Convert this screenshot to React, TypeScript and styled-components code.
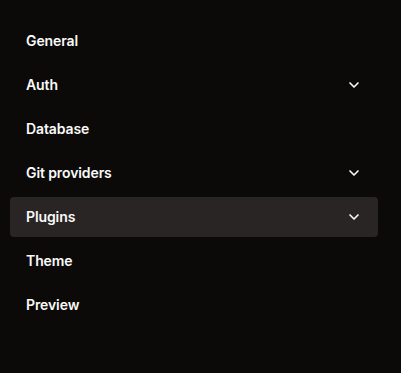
import React from "react";
import styled, { createGlobalStyle } from "styled-components";
import { ChevronDown } from "lucide-react";

const Global = createGlobalStyle`
  html, body { margin: 0; padding: 0; background: #0c0a09; }
  body { font-family: Inter, "Noto Sans", sans-serif; }
`;

const Page = styled.div`
  width: 401px;
  height: 373px;
  background: #0c0a09;
  box-sizing: border-box;
  padding: 21px 23px 0 10px;
`;

const Nav = styled.nav`
  display: flex;
  flex-direction: column;
  gap: 4px;
`;

const Item = styled.div<{ $active?: boolean }>`
  height: 40px;
  display: flex;
  align-items: center;
  justify-content: space-between;
  padding: 0 16px;
  border-radius: 4px;
  background: ${(p) => (p.$active ? "#292524" : "transparent")};
  color: #fafaf9;
  font-size: 14px;
  font-weight: 600;
  letter-spacing: -0.1px;
`;

const Label = styled.span`
  margin-top: -2px;
`;

const Chevron = styled(ChevronDown)`
  width: 16px;
  height: 16px;
  color: #fafaf9;
`;

const items: { label: string; expandable?: boolean; active?: boolean }[] = [
  { label: "General" },
  { label: "Auth", expandable: true },
  { label: "Database" },
  { label: "Git providers", expandable: true },
  { label: "Plugins", expandable: true, active: true },
  { label: "Theme" },
  { label: "Preview" },
];

export default function App() {
  return (
    <>
      <Global />
      <Page>
        <Nav>
          {items.map((it) => (
            <Item key={it.label} $active={it.active}>
              <Label>{it.label}</Label>
              {it.expandable && <Chevron strokeWidth={2.5} />}
            </Item>
          ))}
        </Nav>
      </Page>
    </>
  );
}
